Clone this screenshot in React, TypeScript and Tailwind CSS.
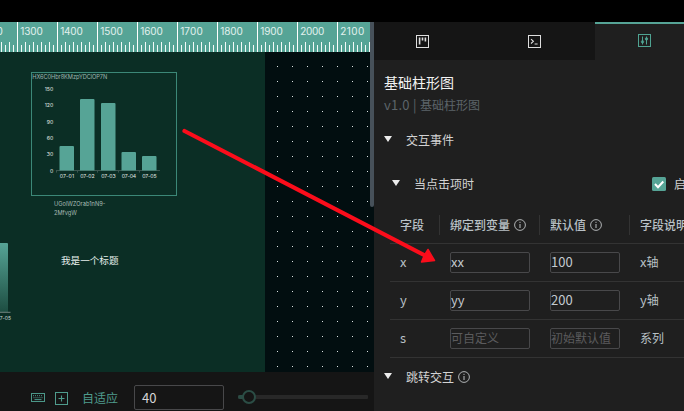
import React from "react";

const cjk = "font-['Noto_Sans_CJK_SC','Noto_Sans',sans-serif]";

function Ruler() {
  const majors = [-23, 17, 57, 97, 137, 177, 217, 257, 297, 337];
  const ticks = Array.from({ length: 93 }, (_, i) => 1 + i * 4);
  return (
    <svg className="block h-[30px] w-[370px] shrink-0 bg-[#56a496]" viewBox="0 0 370 30">
      {ticks.map((x) => (
        <rect key={x} x={x} y={(x - 1) % 8 === 0 ? 20 : 23} width="1" height="10" fill="#f4faf8" />
      ))}
      {majors.map((x, i) => (
        <g key={x}>
          <rect x={x} y="0" width="1" height="30" fill="#fff" />
          <text x={x + 3.2} y="13" fontSize="10" textLength={i < 8 ? 22.5 : 24} fontFamily="Inter, sans-serif" fill="#e2f1ee">
            {1200 + i * 100}
          </text>
        </g>
      ))}
    </svg>
  );
}

const bars = [
  { x: 59.5, top: 146, label: "07-01" },
  { x: 80, top: 99, label: "07-02" },
  { x: 101, top: 103, label: "07-03" },
  { x: 121.5, top: 152, label: "07-04" },
  { x: 142, top: 156, label: "07-05" },
];

function Chart() {
  return (
    <svg className="block h-[122px] w-[144px]" viewBox="32 73 144 122" fontFamily="Inter, sans-serif">
      <text x="32.3" y="79" fontSize="5.7" textLength="75" fill="#9fb5af">HX6C0Hbr8KMzpYDClOP7N</text>
      {[150, 120, 90, 60, 30, 0].map((v, i) => (
        <text key={v} x="53.3" y={91 + i * 16.3} fontSize="5.2" textAnchor="end" fill="#e2eae8">{v}</text>
      ))}
      <path d="M56 170.5H160" stroke="#5c706b" strokeWidth="0.6" />
      {[56.5, 77.5, 97.5, 118.5, 139.5].map((x) => (
        <path key={x} d={`M${x} 171v1.6`} stroke="#5c706b" strokeWidth="0.6" />
      ))}
      {bars.map((b) => (
        <g key={b.label}>
          <path
            d={`M${b.x} 170.5V${b.top + 1}q0-1 1-1h12.5q1 0 1 1V170.5z`}
            fill="#56a496"
          />
          <text x={b.x + 7.4} y="178.2" fontSize="5.2" textAnchor="middle" textLength="14.5" fill="#e2eae8">{b.label}</text>
        </g>
      ))}
    </svg>
  );
}

function Canvas() {
  return (
    <div className="flex h-[320px]">
      <div className="w-[265px] bg-[#0b2e25]">
        <div className="ml-[31px] mt-5 h-[124px] w-[146px] border border-[#3c8878]">
          <Chart />
        </div>
        <div className="ml-[54px] mt-[3px] h-[22px] w-[60px] font-['Inter',sans-serif] text-[5.7px] leading-[9px] text-[#a9bcb6]">
          UGolWZOrab1nN9-
          <br />
          2MfvgW
        </div>
        <div className="flex">
          <svg className="mt-[22px] block h-[80px] w-[12px]" viewBox="0 243 12 80" fontFamily="Inter, sans-serif">
            <defs>
              <linearGradient id="barFade" x1="0" y1="0" x2="0" y2="1">
                <stop offset="0" stopColor="#56a496" />
                <stop offset="1" stopColor="#1d4d41" />
              </linearGradient>
            </defs>
            <path d="M0 243h7q1 0 1 1v68H0z" fill="url(#barFade)" />
            <path d="M0 312.3h10.5" stroke="#8a9a96" strokeWidth="0.8" />
            <text x="11" y="320" fontSize="5" textAnchor="end" fill="#d5dfdc">07-05</text>
          </svg>
          <div className={`${cjk} ml-[49px] mt-[30px] text-[9.6px] leading-[18px] text-[#e6eeeb]`}>我是一个标题</div>
        </div>
      </div>
      <svg className="block h-[320px] w-[109px] bg-[#020e10]" viewBox="265 52 109 320">
        {Array.from({ length: 21 }, (_, r) =>
          Array.from({ length: 7 }, (_, c) => (
            <rect key={`${r}-${c}`} x={277 + c * 15} y={66 + r * 15} width="1" height="1" fill="#dce2e2" />
          ))
        )}
      </svg>
    </div>
  );
}

function Footer() {
  return (
    <div className="flex h-[39px] bg-[#151515]">
      <svg className="ml-[31px] mt-[21px] h-[10px] w-[14px]" viewBox="0 0 14 10" fill="none" stroke="#4b9788">
        <rect x="0.5" y="0.5" width="13" height="8" />
        <path d="M2 2.7h10M2.5 4.7h9" strokeDasharray="1 1" />
        <path d="M3.5 6.6h7" />
      </svg>
      <svg className="ml-[10px] mt-5 h-[13px] w-[13px]" viewBox="0 0 13 13" fill="none" stroke="#4f9c8d">
        <rect x="0.5" y="0.5" width="12" height="12" />
        <path d="M3.5 6.5h6M6.5 3.5v6" strokeWidth="1.1" />
      </svg>
      <div className={`${cjk} ml-[14px] mt-[17px] w-[53px] shrink-0 text-[12px] leading-[18px] text-[#4f9c8d]`}>自适应</div>
      <div className={`${cjk} ml-[-1px] mt-[13px] h-[25px] w-[90px] shrink-0 rounded-[2px] border border-[#48484a] pl-[7px] text-[13px] leading-[23px] text-[#d6d6d6]`}>40</div>
      <svg className="ml-3.5 mt-4 h-[18px] w-[132px] shrink-0" viewBox="238 388 132 18">
        <rect x="238" y="395" width="130" height="4" rx="1" fill="#282828" />
        <path d="M240 397h5" stroke="#2b4d45" strokeWidth="4" strokeLinecap="round" />
        <circle cx="249" cy="397" r="6" fill="#151515" stroke="#2b4d45" strokeWidth="2" />
      </svg>
    </div>
  );
}

function Info() {
  return (
    <svg className="h-[12px] w-[12px] shrink-0" viewBox="0 0 12 12" fill="none" stroke="#bfc3c5">
      <circle cx="6" cy="6" r="5.4" strokeWidth="0.9" />
      <path d="M6 5v4M6 2.8v1.1" />
    </svg>
  );
}

function Caret() {
  return (
    <svg className="mb-[2px] h-[6px] w-[8px] shrink-0" viewBox="0 0 8 6">
      <path d="M0 0h8L4 6z" fill="#ececec" />
    </svg>
  );
}

function Tabs() {
  return (
    <div className="flex h-[38px] bg-[#151515]">
      <div className="flex w-[98px] shrink-0 items-center justify-center">
        <svg className="-ml-px h-[13px] w-[13px]" viewBox="0 0 13 13" fill="none" stroke="#dedede">
          <rect x="0.5" y="0.5" width="12" height="12" />
          <path d="M3.6 2.5v7M6.5 2.5v3M9.4 2.5v4" strokeWidth="1.6" />
        </svg>
      </div>
      <div className="flex w-[123px] shrink-0 items-center justify-center">
        <svg className="ml-px h-[13px] w-[13px]" viewBox="0 0 13 13" fill="none" stroke="#dedede">
          <rect x="0.5" y="0.5" width="12" height="12" />
          <path d="M3 4.2l2.4 2.1L3 8.5M6.6 9h3" strokeWidth="1.1" />
        </svg>
      </div>
      <div className="flex w-[100px] shrink-0 justify-center border-t-2 border-[#56a496] bg-[#1f1f1f] pt-[10px]">
        <svg className="-ml-px h-[13px] w-[13px]" viewBox="0 0 13 13" fill="none" stroke="#4fa392">
          <rect x="0.5" y="0.5" width="12" height="12" />
          <path d="M4.5 2.5v8M8.5 2.5v8" />
          <circle cx="4.5" cy="7.8" r="1.2" />
          <circle cx="8.5" cy="4.9" r="1.2" />
        </svg>
      </div>
    </div>
  );
}

function Field({ value, placeholder, width }: { value?: string; placeholder?: string; width: string }) {
  return (
    <div className={`${width} h-[21px] overflow-hidden whitespace-nowrap rounded-[2px] border border-[#48484a] leading-[18px] ${value ? "text-[13px] text-[#c3cad0]" : "text-[12px] text-[#5b5b5d]"}`}>
      {value || placeholder}
    </div>
  );
}

const rows = [
  { name: "x", bind: "xx", def: "100", latin: "x", desc: "轴" },
  { name: "y", bind: "yy", def: "200", latin: "y", desc: "轴" },
  { name: "s", bind: "", def: "", latin: "", desc: "系列" },
];

function Table() {
  return (
    <div className="ml-4 w-[310px] text-[12px] text-[#b9c1c6]">
      <div className="flex h-[38px] items-center border-b border-[#333] font-medium">
        <div className="flex h-5 w-[50px] items-center border-r border-[#333] pl-[10px]">字段</div>
        <div className="flex h-5 w-[100px] items-center gap-1 border-r border-[#333] pl-[10px]">绑定到变量<Info /></div>
        <div className="flex h-5 w-[90px] items-center gap-1 border-r border-[#333] pl-[10px]">默认值<Info /></div>
        <div className="flex h-5 items-center whitespace-nowrap pl-[10px]">字段说明</div>
      </div>
      {rows.map((r) => (
        <div key={r.name} className="flex h-[38px] items-center border-b border-[#333]">
          <div className="w-[60px] pb-[2px] pl-[10px] text-[13px] leading-[18px]">{r.name}</div>
          <Field value={r.bind} placeholder="可自定义" width="w-[80px] mr-5" />
          <Field value={r.def} placeholder="初始默认值" width="w-[70px] mr-5" />
          <div className="whitespace-nowrap pb-[2px] leading-[18px]"><span className="text-[13px]">{r.latin}</span>{r.desc}</div>
        </div>
      ))}
    </div>
  );
}

function Panel() {
  return (
    <div className={`${cjk} h-[389px] w-[310px] overflow-hidden bg-[#1f1f1f] text-[12px] text-[#d3d3d3]`}>
      <Tabs />
      <div className="ml-[10px] mt-[12px] text-[14px] leading-5 text-[#f2f2f2]">基础柱形图</div>
      <div className="ml-[10px] mt-[4px] h-[18px] text-[12px] leading-[18px] text-[#5c6469]">
        <span className="text-[13px] tracking-[0.25px]">v1.0 | </span>基础柱形图
      </div>
      <div className="ml-[10px] mt-[16px] flex h-5 items-center gap-[14px]"><Caret />交互事件</div>
      <div className="ml-[18px] mt-6 flex h-5 items-center gap-[14px]">
        <Caret />
        <div className="w-[224px] shrink-0">当点击项时</div>
        <div className="flex shrink-0 items-center gap-[8px]">
          <svg className="h-[14px] w-[14px]" viewBox="0 0 14 14">
            <rect width="14" height="14" rx="1.5" fill="#56a496" />
            <path d="M3 7l3 3.2L11.3 4.5" fill="none" stroke="#fff" strokeWidth="2" />
          </svg>
          启用
        </div>
      </div>
      <div className="mt-[12px]"><Table /></div>
      <div className="ml-[10px] mt-[9px] flex h-5 items-center gap-[14px]">
        <Caret />
        <div className="flex items-center gap-1">跳转交互<Info /></div>
      </div>
    </div>
  );
}

export default function App() {
  return (
    <div className="relative h-[411px] w-[684px] overflow-hidden bg-black pt-[22px]">
      <div className="flex">
        <div className="relative w-[374px] shrink-0">
          <div className="flex bg-[#020e10]"><Ruler /></div>
          <Canvas />
          <Footer />
          <div className="absolute right-0 top-0 h-[185px] w-1 rounded-b bg-[#47515a]" />
        </div>
        <Panel />
      </div>
      <svg className="pointer-events-none absolute left-0 top-0 h-[411px] w-[684px]" viewBox="0 0 684 411">
        <path d="M184.5 131L428 257" stroke="#fb0d1b" strokeWidth="4.2" strokeLinecap="round" />
        <path d="M428 249.5L434.5 260.5L421.5 262L424 256z" fill="#fb0d1b" stroke="#fb0d1b" strokeWidth="1.5" strokeLinejoin="round" />
      </svg>
    </div>
  );
}
